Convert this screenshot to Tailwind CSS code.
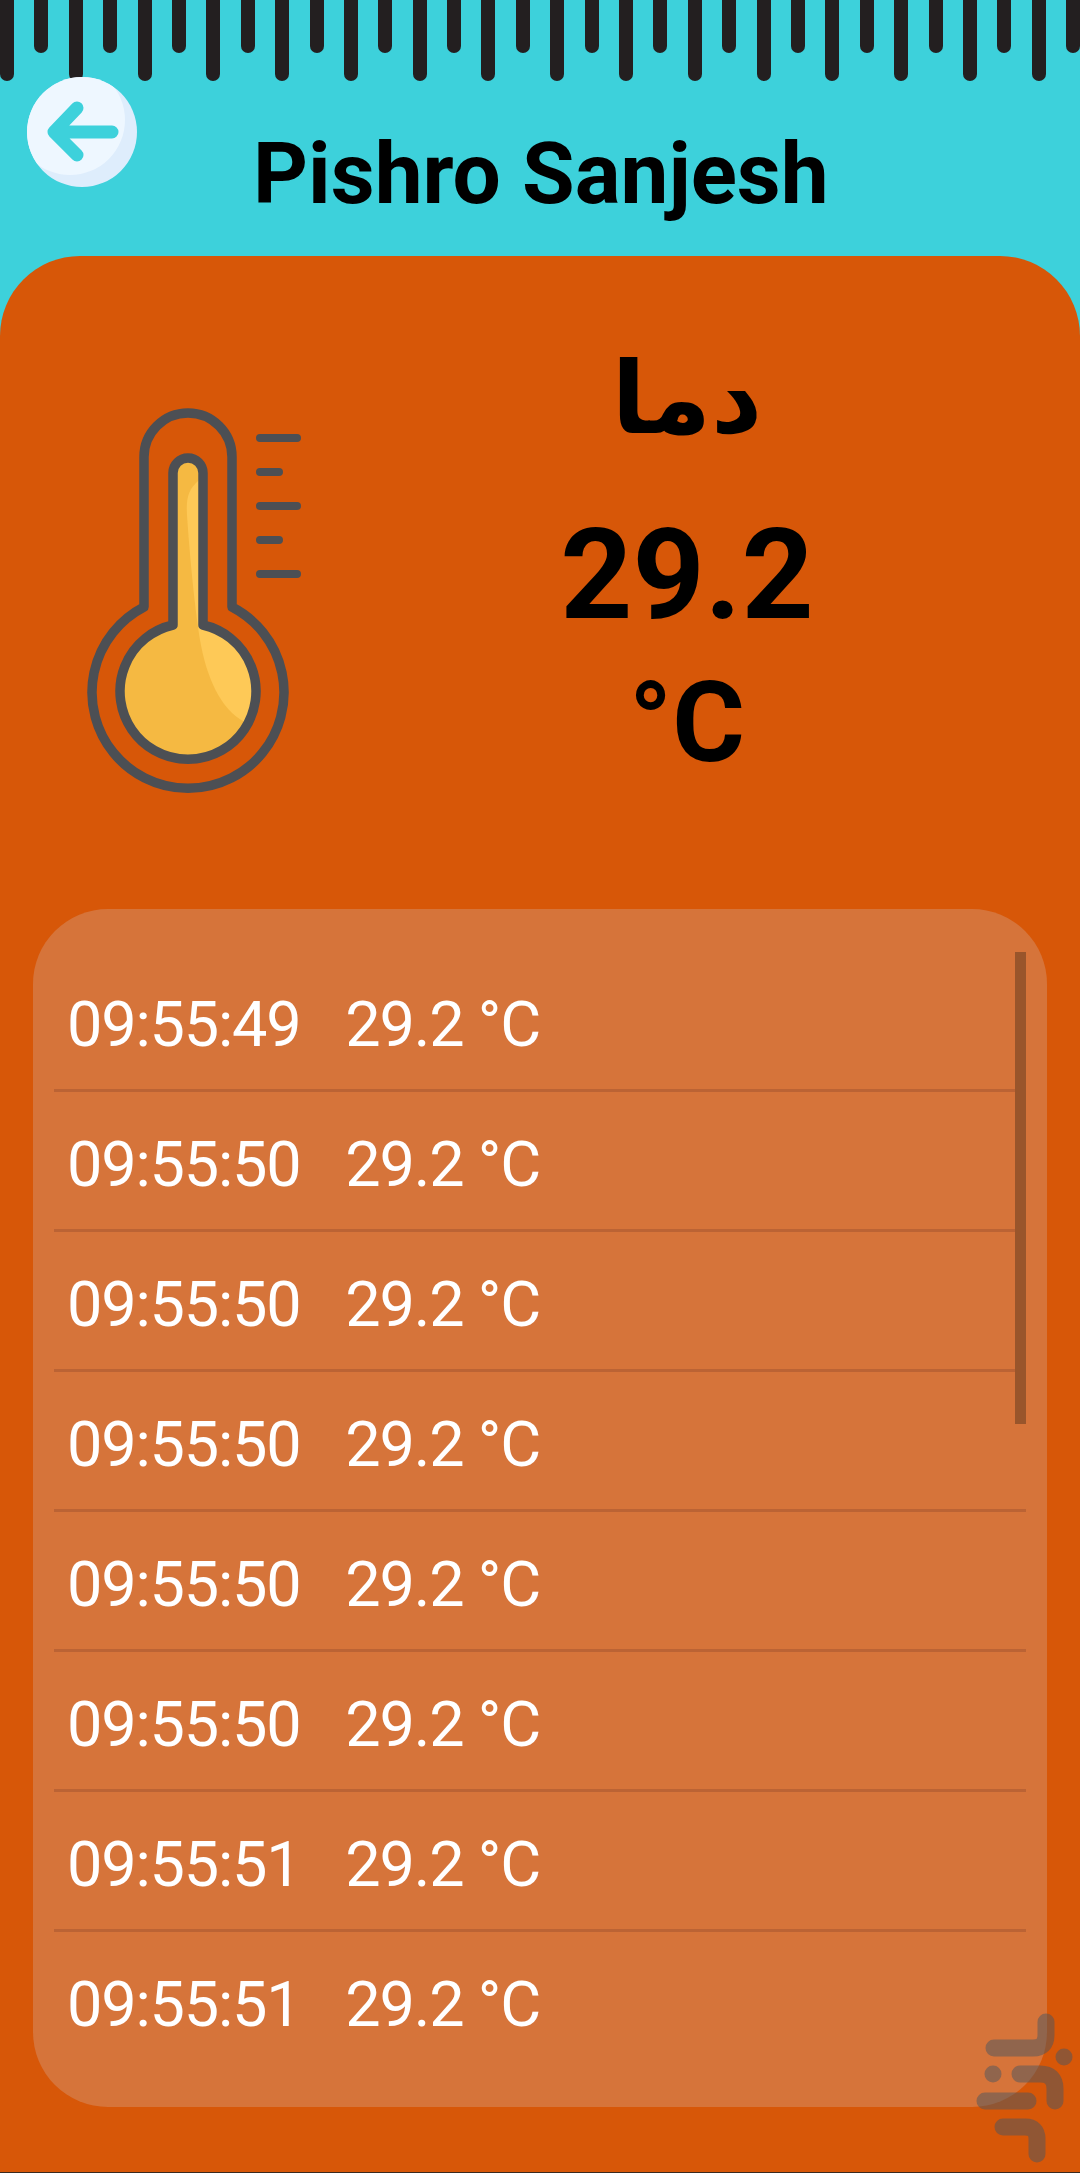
<!DOCTYPE html>
<html lang="en">

<head>
    <meta charset="UTF-8">
    <meta name="viewport" content="width=device-width, initial-scale=1.0">
    <title>Pishro Sanjesh</title>
    <script src="https://cdn.jsdelivr.net/npm/@tailwindcss/browser@4"></script>
</head>

<body class="relative w-[1080px] h-[2173px] overflow-hidden bg-[#3dd1db] font-['Roboto',sans-serif] flex flex-col">

    <!-- ruler -->
    <div class="flex items-start gap-[20.4px] h-[81px] shrink-0">
        <div class="w-[14px] h-[81px] shrink-0 rounded-b-full bg-[#231f20]"></div>
        <div class="w-[14px] h-[53px] shrink-0 rounded-b-full bg-[#231f20]"></div>
        <div class="w-[14px] h-[81px] shrink-0 rounded-b-full bg-[#231f20]"></div>
        <div class="w-[14px] h-[53px] shrink-0 rounded-b-full bg-[#231f20]"></div>
        <div class="w-[14px] h-[81px] shrink-0 rounded-b-full bg-[#231f20]"></div>
        <div class="w-[14px] h-[53px] shrink-0 rounded-b-full bg-[#231f20]"></div>
        <div class="w-[14px] h-[81px] shrink-0 rounded-b-full bg-[#231f20]"></div>
        <div class="w-[14px] h-[53px] shrink-0 rounded-b-full bg-[#231f20]"></div>
        <div class="w-[14px] h-[81px] shrink-0 rounded-b-full bg-[#231f20]"></div>
        <div class="w-[14px] h-[53px] shrink-0 rounded-b-full bg-[#231f20]"></div>
        <div class="w-[14px] h-[81px] shrink-0 rounded-b-full bg-[#231f20]"></div>
        <div class="w-[14px] h-[53px] shrink-0 rounded-b-full bg-[#231f20]"></div>
        <div class="w-[14px] h-[81px] shrink-0 rounded-b-full bg-[#231f20]"></div>
        <div class="w-[14px] h-[53px] shrink-0 rounded-b-full bg-[#231f20]"></div>
        <div class="w-[14px] h-[81px] shrink-0 rounded-b-full bg-[#231f20]"></div>
        <div class="w-[14px] h-[53px] shrink-0 rounded-b-full bg-[#231f20]"></div>
        <div class="w-[14px] h-[81px] shrink-0 rounded-b-full bg-[#231f20]"></div>
        <div class="w-[14px] h-[53px] shrink-0 rounded-b-full bg-[#231f20]"></div>
        <div class="w-[14px] h-[81px] shrink-0 rounded-b-full bg-[#231f20]"></div>
        <div class="w-[14px] h-[53px] shrink-0 rounded-b-full bg-[#231f20]"></div>
        <div class="w-[14px] h-[81px] shrink-0 rounded-b-full bg-[#231f20]"></div>
        <div class="w-[14px] h-[53px] shrink-0 rounded-b-full bg-[#231f20]"></div>
        <div class="w-[14px] h-[81px] shrink-0 rounded-b-full bg-[#231f20]"></div>
        <div class="w-[14px] h-[53px] shrink-0 rounded-b-full bg-[#231f20]"></div>
        <div class="w-[14px] h-[81px] shrink-0 rounded-b-full bg-[#231f20]"></div>
        <div class="w-[14px] h-[53px] shrink-0 rounded-b-full bg-[#231f20]"></div>
        <div class="w-[14px] h-[81px] shrink-0 rounded-b-full bg-[#231f20]"></div>
        <div class="w-[14px] h-[53px] shrink-0 rounded-b-full bg-[#231f20]"></div>
        <div class="w-[14px] h-[81px] shrink-0 rounded-b-full bg-[#231f20]"></div>
        <div class="w-[14px] h-[53px] shrink-0 rounded-b-full bg-[#231f20]"></div>
        <div class="w-[14px] h-[81px] shrink-0 rounded-b-full bg-[#231f20]"></div>
        <div class="w-[14px] h-[53px] shrink-0 rounded-b-full bg-[#231f20]"></div>
    </div>

    <!-- header -->
    <div class="flex items-start h-[175px] shrink-0 -mt-[4px] mb-[4px] pl-[27px]">
        <svg class="relative w-[110px] h-[110px] shrink-0" viewBox="0 0 110 110">
            <defs>
                <clipPath id="backCircle">
                    <circle cx="55" cy="55" r="55" />
                </clipPath>
            </defs>
            <circle cx="55" cy="55" r="55" fill="#deedfc" />
            <circle clip-path="url(#backCircle)" cx="43" cy="43" r="55" fill="#eef7ff" />
            <path d="M50 31 L27 55 L50 78 M27 55 H85" fill="none" stroke="#3dd1db" stroke-width="13" stroke-linecap="round" stroke-linejoin="round" />
        </svg>
        <h1 class="ml-[116px] mt-[51px] text-[85.5px] leading-[92px] font-bold text-black">Pishro Sanjesh</h1>
    </div>

    <!-- card -->
    <div class="flex-1 flex flex-col bg-[#d75708] rounded-t-[80px]">
        <div class="flex h-[653px] shrink-0">
            <svg class="ml-[60px] mt-[124px] w-[270px] h-[440px] shrink-0" viewBox="0 0 270 440">
                <defs>
                    <clipPath id="bulb">
                        <path d="M113 245 V93 a15 15 0 0 1 30 0 V245 A68 68 0 1 1 113 245Z" />
                    </clipPath>
                </defs>
                <path d="M113 245 V93 a15 15 0 0 1 30 0 V245 A68 68 0 1 1 113 245Z" fill="#f5b942" />
                <path clip-path="url(#bulb)" d="M139 100 C128 110 126 118 127 135 C130 180 135 230 140 260 C146 295 160 330 185 342 L220 342 L220 90Z" fill="#fec957" />
                <path d="M113 245 V93 a15 15 0 0 1 30 0 V245 A68 68 0 1 1 113 245Z" fill="none" stroke="#4c4f54" stroke-width="9.5" stroke-linejoin="round" />
                <path d="M84 227 V77 a44 44 0 0 1 88 0 V227 A96 96 0 1 1 84 227Z" fill="none" stroke="#4c4f54" stroke-width="9.5" stroke-linejoin="round" />
                <path d="M200 58 H237 M200 92 H219 M200 126 H237 M200 160 H219 M200 194 H237" fill="none" stroke="#4c4f54" stroke-width="8" stroke-linecap="round" />
            </svg>
            <div class="ml-[192px] w-[330px] flex flex-col items-center text-black font-bold">
                <div dir="rtl" class="mt-[83px] h-[120px] font-['DejaVu_Sans',sans-serif] text-[100px] leading-[120px]">دما</div>
                <div class="mt-[42px] text-[126px] leading-[148px]">29.2</div>
                <div class="mt-[18px] text-[111px] leading-[112px]">°C</div>
            </div>
        </div>

        <!-- readings -->
        <div class="relative mx-[33px] h-[1198px] rounded-[75px] bg-[#d6743a] pt-[43px] px-[21px] text-white text-[63px] tracking-[-1.2px]">
            <div class="absolute right-[21px] top-[43px] w-[11px] h-[472px] bg-[#99552b]"></div>
            <div class="flex gap-[45px] items-center h-[140px] pl-[13px] pt-[10px] border-b-[3px] border-[#bb6334]"><span>09:55:49</span><span>29.2 °C</span></div>
            <div class="flex gap-[45px] items-center h-[140px] pl-[13px] pt-[10px] border-b-[3px] border-[#bb6334]"><span>09:55:50</span><span>29.2 °C</span></div>
            <div class="flex gap-[45px] items-center h-[140px] pl-[13px] pt-[10px] border-b-[3px] border-[#bb6334]"><span>09:55:50</span><span>29.2 °C</span></div>
            <div class="flex gap-[45px] items-center h-[140px] pl-[13px] pt-[10px] border-b-[3px] border-[#bb6334]"><span>09:55:50</span><span>29.2 °C</span></div>
            <div class="flex gap-[45px] items-center h-[140px] pl-[13px] pt-[10px] border-b-[3px] border-[#bb6334]"><span>09:55:50</span><span>29.2 °C</span></div>
            <div class="flex gap-[45px] items-center h-[140px] pl-[13px] pt-[10px] border-b-[3px] border-[#bb6334]"><span>09:55:50</span><span>29.2 °C</span></div>
            <div class="flex gap-[45px] items-center h-[140px] pl-[13px] pt-[10px] border-b-[3px] border-[#bb6334]"><span>09:55:51</span><span>29.2 °C</span></div>
            <div class="flex gap-[45px] items-center h-[140px] pl-[13px] pt-[10px] border-b-[3px] border-transparent"><span>09:55:51</span><span>29.2 °C</span></div>
        </div>
    </div>

    <!-- store watermark -->
    <svg class="absolute right-0 bottom-0 w-[180px] h-[223px]" viewBox="900 1950 180 223">
        <g fill="none" stroke="#4a5560" stroke-opacity="0.5" stroke-width="17" stroke-linecap="round">
            <path d="M1046 2022 V2035 Q1046 2048 1033 2048 H994" />
            <path d="M1020 2074 H1040 Q1055 2074 1055 2089 V2101" />
            <path d="M985 2101 H1028" />
            <path d="M1003 2127 H1025 Q1037 2127 1037 2139 V2154" />
        </g>
        <circle cx="1064" cy="2057" r="8.5" fill="#4a5560" fill-opacity="0.5" />
        <circle cx="993" cy="2074" r="8.5" fill="#4a5560" fill-opacity="0.5" />
    </svg>

    <div class="absolute left-0 bottom-0 w-full h-[1px] bg-[#3a2a20]"></div>
</body>

</html>
